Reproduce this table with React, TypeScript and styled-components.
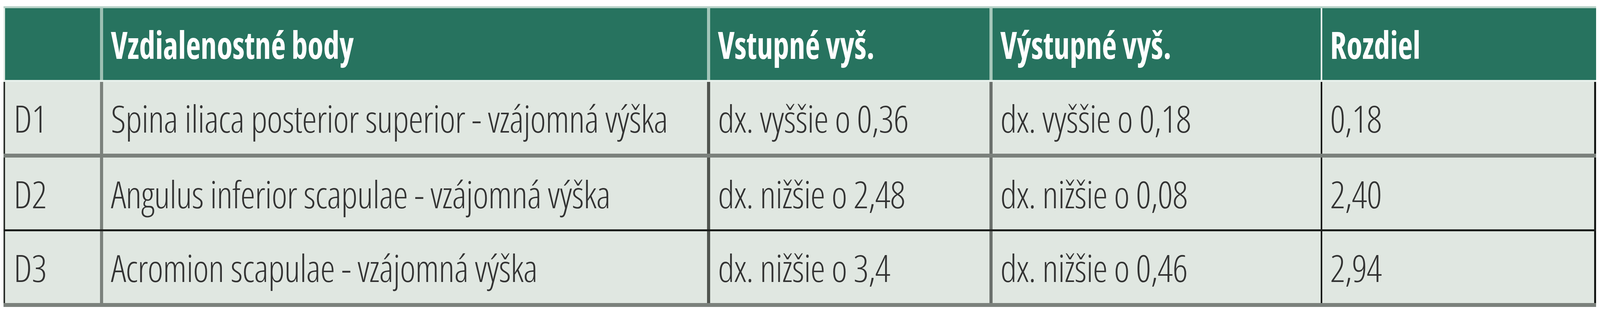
import React from 'react';
import styled, { createGlobalStyle, css } from 'styled-components';

// The page is 4096px wide while the picture is 4930px: horizontal sizes are
// drawn at 4096/4930 of the reference, vertical ones as they are.

const GlobalStyle = createGlobalStyle`
  body {
    margin: 0;
    background: #fff;
    font-family: "Open Sans", "Noto Sans", sans-serif;
  }
`;

const columns = [247, 1554, 723, 848, 705];

const headers = ['', 'Vzdialenostné body', 'Vstupné vyš.', 'Výstupné vyš.', 'Rozdiel'];

const rows = [
  ['D1', 'Spina iliaca posterior superior - vzájomná výška', 'dx. vyššie o 0,36', 'dx. vyššie o 0,18', '0,18'],
  ['D2', 'Angulus inferior scapulae - vzájomná výška', 'dx. nižšie o 2,48', 'dx. nižšie o 0,08', '2,40'],
  ['D3', 'Acromion scapulae - vzájomná výška', 'dx. nižšie o 3,4', 'dx. nižšie o 0,46', '2,94'],
];

type Line = { width: number; color: string };

// line under each body row: gray, black, gray
const rowLines: Line[] = [
  { width: 10, color: '#7b817c' },
  { width: 5, color: '#1b1d1b' },
  { width: 10, color: '#7b817c' },
];

// divider on the left of each column
const headDividers: Line[] = [
  { width: 4, color: '#dfeae4' },
  { width: 8, color: '#9dc0b3' },
  { width: 8, color: '#a3c6b9' },
  { width: 8, color: '#a6c8bb' },
  { width: 4, color: '#f6faf8' },
];

const bodyDividers: Line[] = [
  { width: 4, color: '#2b2e2b' },
  { width: 8, color: '#7b817c' },
  { width: 8, color: '#50544f' },
  { width: 8, color: '#6b706c' },
  { width: 4, color: '#161816' },
];

const App = () => {
  return (
    <>
      <GlobalStyle />
      <Table>
        <HeadRow>
          {headers.map((h, i) => (
            <HeadCell key={i} $line={headDividers[i]}>
              <HeadText>{h}</HeadText>
            </HeadCell>
          ))}
        </HeadRow>
        {rows.map((r, ri) => (
          <BodyRow key={r[0]} $line={rowLines[ri]}>
            {r.map((c, i) => (
              <BodyCell key={i} $line={bodyDividers[i]} $first={i === 0} $last={i === r.length - 1}>
                {c}
              </BodyCell>
            ))}
          </BodyRow>
        ))}
      </Table>
    </>
  );
};

export default App;

const Table = styled.div`
  margin: 16px 0 0 9px;
  width: ${columns.reduce((a, b) => a + b, 0)}px;
  display: flex;
  flex-direction: column;
`;

const rowBase = css`
  display: grid;
  grid-template-columns: ${columns.map((c) => `${c}px`).join(' ')};
  box-sizing: border-box;
`;

const HeadRow = styled.div`
  ${rowBase};
  height: 194px;
  border-top: 5px solid #b8d2c8;
  border-bottom: 5px solid #e7f0eb;
  background: #27735f;
`;

const BodyRow = styled.div<{ $line: Line }>`
  ${rowBase};
  height: ${(p) => 184 + p.$line.width}px;
  border-bottom: ${(p) => `${p.$line.width}px solid ${p.$line.color}`};
  background: #e0e7e1;

  &:first-of-type {
    height: 195px;
  }
`;

const cellBase = css<{ $line: Line }>`
  box-sizing: border-box;
  min-width: 0;
  display: flex;
  align-items: center;
  padding-left: 20px;
  border-left: ${(p) => `${p.$line.width}px solid ${p.$line.color}`};
  font-size: 96px;
  white-space: nowrap;
`;

const HeadCell = styled.div<{ $line: Line }>`
  ${cellBase};
  color: #ffffff;
  font-weight: 700;
`;

const HeadText = styled.span`
  display: inline-block;
  font-stretch: 75%;
  transform: scaleX(0.86);
  transform-origin: left center;
`;

const BodyCell = styled.div<{ $line: Line; $first: boolean; $last: boolean }>`
  ${cellBase};
  color: #333333;
  font-weight: 300;
  font-stretch: 75%;
  letter-spacing: -1px;
  ${(p) => p.$first && 'padding-left: 22px;'}
  ${(p) => p.$last && 'border-right: 5px solid #161816;'}
`;
